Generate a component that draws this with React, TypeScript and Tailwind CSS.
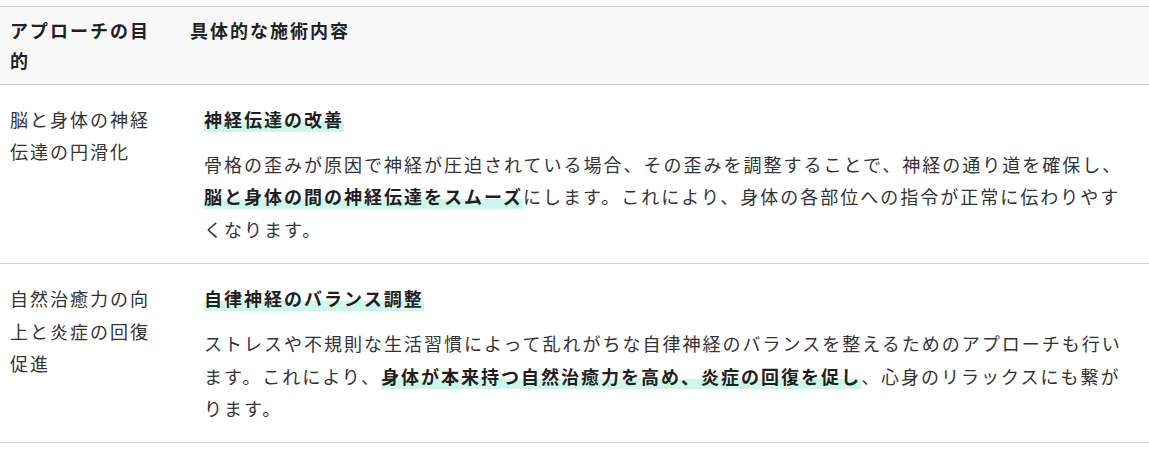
import React from "react";

const font = { fontFamily: '"Noto Sans CJK JP", "Noto Sans", sans-serif' };

function Mark({ children }: { children: React.ReactNode }) {
  return (
    <strong className="font-bold text-[#1f1f1f] bg-[linear-gradient(transparent_63%,#cdf7ea_63%)]">
      {children}
    </strong>
  );
}

function Row({
  left,
  title,
  body,
}: {
  left: React.ReactNode;
  title: React.ReactNode;
  body: React.ReactNode;
}) {
  return (
    <div className="flex border-b border-[#d6d6d6]">
      <div className="w-[180px] shrink-0 pl-[10px] pr-[20px] py-[18px] leading-[32.4px]">
        {left}
      </div>
      <div className="flex-1 pl-[24px] pr-[20px] py-[18px] leading-[32.4px]">
        <p className="mb-[12.6px]">
          <Mark>{title}</Mark>
        </p>
        <p>{body}</p>
      </div>
    </div>
  );
}

export default function App() {
  return (
    <div
      className="w-[1149px] h-[451px] bg-white pt-[6px] text-[18px] tracking-[2px] text-[#333333]"
      style={font}
    >
      <div className="flex border-t border-b border-[#d0d0d0] bg-[#f8f8f8] font-bold text-[#222222]">
        <div className="w-[180px] shrink-0 pl-[10px] pr-[20px] pt-[8px] pb-[9px] leading-[30px]">
          アプローチの目的
        </div>
        <div className="flex-1 pl-[10px] pr-[20px] pt-[8px] pb-[9px] leading-[30px]">
          具体的な施術内容
        </div>
      </div>
      <Row
        left="脳と身体の神経伝達の円滑化"
        title="神経伝達の改善"
        body={
          <>
            骨格の歪みが原因で神経が圧迫されている場合、その歪みを調整することで、神経の通り道を確保し、
            <Mark>脳と身体の間の神経伝達をスムーズ</Mark>
            にします。これにより、身体の各部位への指令が正常に伝わりやすくなります。
          </>
        }
      />
      <Row
        left="自然治癒力の向上と炎症の回復促進"
        title="自律神経のバランス調整"
        body={
          <>
            ストレスや不規則な生活習慣によって乱れがちな自律神経のバランスを整えるためのアプローチも行います。これにより、
            <Mark>身体が本来持つ自然治癒力を高め、炎症の回復を促し</Mark>
            、心身のリラックスにも繋がります。
          </>
        }
      />
    </div>
  );
}
